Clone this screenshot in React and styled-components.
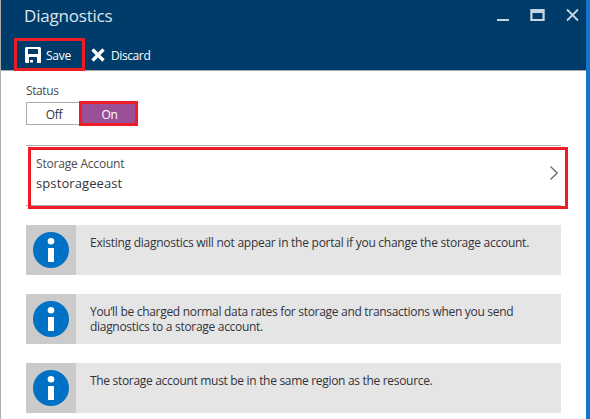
import React from "react";
import styled, { createGlobalStyle } from "styled-components";

const GlobalStyle = createGlobalStyle`
  * { box-sizing: border-box; }
  body {
    margin: 0;
    background: #fff;
    font-family: "Open Sans", "Noto Sans", sans-serif;
    font-size: 12px;
    line-height: 15px;
    color: #32333b;
  }
`;

const Blade = styled.main`
  width: 590px;
  height: 419px;
  overflow: hidden;
  background: #fff;
  border-left: 1px solid #acacac;
  border-right: 4px solid #1475c9;
`;

const Header = styled.header`
  height: 71px;
  margin-left: -1px;
  background: #003c6a;
  border-left: 1px solid #1d527b;
  border-bottom: 1px solid #acacac;
`;

const TitleBar = styled.div`
  display: flex;
  justify-content: space-between;
  height: 38px;
  padding: 4px 7px 0 23px;
`;

const Title = styled.h1`
  margin: 0;
  font-size: 17px;
  line-height: 24px;
  font-weight: 400;
  letter-spacing: -0.2px;
  color: #dce6ee;
`;

const WindowControls = styled.div`
  display: flex;
  gap: 20px;
  padding-top: 4px;
`;

const ControlIcon = styled.svg`
  display: block;
  width: ${(p) => p.$width}px;
  height: 14px;
`;

const Toolbar = styled.div`
  display: flex;
  padding-left: 13px;
`;

const Command = styled.button`
  display: flex;
  align-items: center;
  width: ${(p) => p.$width}px;
  height: 33px;
  padding: 0 0 0 ${(p) => p.$inset}px;
  gap: ${(p) => p.$gap}px;
  background: none;
  border: ${(p) => (p.$marked ? "3px solid #ee1c25" : "0")};
  color: #fff;
  font: inherit;
  letter-spacing: ${(p) => p.$tracking}px;

  svg { flex: none; }
`;

const CommandLabel = styled.span`
  padding-top: 2px;
`;

const Content = styled.div`
  padding: 12px 25px 0;
`;

const Label = styled.div`
  color: #4b4b50;
  letter-spacing: ${(p) => p.$tracking}px;
`;

const Toggle = styled.div`
  display: flex;
  align-items: center;
  height: 25px;
  margin-top: 3px;
`;

const Option = styled.button`
  display: flex;
  align-items: center;
  justify-content: center;
  width: ${(p) => (p.$selected ? 59 : 53)}px;
  height: ${(p) => (p.$selected ? 25 : 23)}px;
  padding: 1px 0 0 2px;
  border: ${(p) => (p.$selected ? "3px solid #ee1c25" : "1px solid #acacac")};
  border-right-width: ${(p) => (p.$selected ? 3 : 0)}px;
  background: ${(p) => (p.$selected ? "#9b4f96" : "#fff")};
  color: ${(p) => (p.$selected ? "#fff" : "#32333b")};
  font: inherit;
  letter-spacing: -0.3px;
`;

const Selector = styled.section`
  position: relative;
  display: flex;
  justify-content: space-between;
  width: 535px;
  height: 61px;
  margin: 19px 0;
  padding: 10px 2px 0 10px;
  border-top: 1px solid #acacac;
  border-bottom: 1px solid #acacac;
`;

const Highlight = styled.div`
  position: absolute;
  top: 1px;
  left: 2px;
  width: 540px;
  height: 62px;
  border: 3px solid #ee1c25;
`;

const Value = styled.div`
  margin-top: 5px;
  font-size: 13px;
  letter-spacing: 0.1px;
`;

const Chevron = styled.svg`
  width: 10px;
  height: 16px;
  margin-top: 9px;
`;

const Notices = styled.div`
  display: grid;
  gap: 19px;
`;

const Notice = styled.div`
  display: flex;
  width: 535px;
  height: 50px;
  background: #e5e5e5;
`;

const NoticeIcon = styled.div`
  display: flex;
  align-items: center;
  justify-content: center;
  width: 50px;
  background: #cbcbcb;
`;

const NoticeText = styled.p`
  margin: 0;
  padding: 10px 0 0 14px;
  white-space: pre-line;
  letter-spacing: ${(p) => p.$tracking}px;
`;

const notices = [
  {
    text: "Existing diagnostics will not appear in the portal if you change the storage account.",
    tracking: -0.26,
  },
  {
    text: "You’ll be charged normal data rates for storage and transactions when you send\ndiagnostics to a storage account.",
    tracking: -0.3,
  },
  {
    text: "The storage account must be in the same region as the resource.",
    tracking: -0.31,
  },
];

function InfoIcon() {
  return (
    <svg width="36" height="36" viewBox="0 0 36 36">
      <circle cx="18" cy="18" r="18" fill="#0072c6" />
      <circle cx="18" cy="9.3" r="3.3" fill="#fff" />
      <path d="M15 16h6v14h-6z" fill="#fff" />
    </svg>
  );
}

function SaveIcon() {
  return (
    <svg width="16" height="16" viewBox="0 0 16 16">
      <path
        fill="#fff"
        fillRule="evenodd"
        d="M1 0h14l1 1v15h-4v-6H4v6H1l-1-1V1zM3 2v5h10V2z"
      />
      <path d="M5 13h3v2.5H5z" fill="#fff" />
    </svg>
  );
}

function DiscardIcon() {
  return (
    <svg width="14" height="14" viewBox="0 0 14 14">
      <path d="M1.5 1.5l11 11M12.5 1.5l-11 11" stroke="#fff" strokeWidth="3.3" />
    </svg>
  );
}

export default function App() {
  return (
    <>
      <GlobalStyle />
      <Blade>
        <Header>
          <TitleBar>
            <Title>Diagnostics</Title>
            <WindowControls>
              <ControlIcon $width={13} viewBox="0 0 13 14">
                <path d="M0 11h12v2H0z" fill="#c9d6e1" />
              </ControlIcon>
              <ControlIcon $width={16} viewBox="0 0 16 14">
                <path d="M.3 1h14.4v12H.3zM2.5 5v6h10V5z" fillRule="evenodd" fill="#c9d6e1" />
              </ControlIcon>
              <ControlIcon $width={13} viewBox="0 0 13 14">
                <path d="M1 1.5l11 11M12 1.5l-11 11" stroke="#c9d6e1" strokeWidth="1.8" />
              </ControlIcon>
            </WindowControls>
          </TitleBar>
          <Toolbar>
            <Command $marked $width={71} $inset={8} $gap={5} $tracking={-0.25}>
              <SaveIcon />
              <CommandLabel>Save</CommandLabel>
            </Command>
            <Command $width={80} $inset={6} $gap={6} $tracking={-0.4}>
              <DiscardIcon />
              <CommandLabel>Discard</CommandLabel>
            </Command>
          </Toolbar>
        </Header>
        <Content>
          <Label $tracking={-0.4}>Status</Label>
          <Toggle>
            <Option>Off</Option>
            <Option $selected>On</Option>
          </Toggle>
          <Selector>
            <div>
              <Label $tracking={-0.2}>Storage Account</Label>
              <Value>spstorageeast</Value>
            </div>
            <Chevron viewBox="0 0 10 16">
              <path d="M1.5 1.5L8.2 8l-6.7 6.5" fill="none" stroke="#66666a" strokeWidth="1.3" />
            </Chevron>
            <Highlight />
          </Selector>
          <Notices>
            {notices.map((n) => (
              <Notice key={n.text}>
                <NoticeIcon>
                  <InfoIcon />
                </NoticeIcon>
                <NoticeText $tracking={n.tracking}>{n.text}</NoticeText>
              </Notice>
            ))}
          </Notices>
        </Content>
      </Blade>
    </>
  );
}
